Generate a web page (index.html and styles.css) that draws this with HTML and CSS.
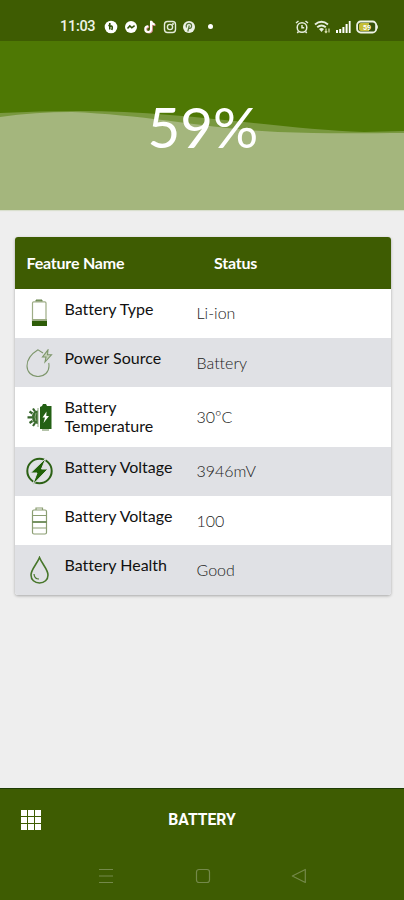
FILE: index.html
```
<!DOCTYPE html>
<html lang="en">
<head>
<meta charset="utf-8">
<title>Battery</title>
<link rel="stylesheet" href="styles.css">
</head>
<body>
<div class="status-bar">
  <span class="time">11:03</span>
  <div class="notifications">
    <svg width="14" height="14" viewBox="0 0 14 14"><circle cx="7" cy="7" r="6.3" fill="#fff"/><path d="M5.8 3v6.5M5.8 6.5c2.5-1.3 3 .5 2 3.5M4.3 5.5h2" fill="none" stroke="#315006" stroke-width="1.6"/></svg>
    <svg width="14" height="14" viewBox="0 0 14 14"><circle cx="7" cy="7" r="6" fill="#fff"/><path d="M3.5 8.5l2.3-2.6 2 1.9 2.8-2.2" fill="none" stroke="#315006" stroke-width="1.5"/></svg>
    <svg width="14" height="14" viewBox="0 0 14 14"><g fill="none" stroke-width="2"><path d="M8.5 1v8.3a2.9 2.9 0 1 1-2.8-3M8.5 1.5c.4 2 1.7 3 3.5 3.3" stroke="#d58a8c" transform="translate(.5 .4)"/><path d="M8 .8v8.4a2.9 2.9 0 1 1-2.8-3M8 1c.4 2.2 1.7 3.2 3.7 3.5" stroke="#fff"/></g></svg>
    <svg width="14" height="14" viewBox="0 0 14 14" fill="none" stroke="#e3ebd9" stroke-width="1.4"><rect x="1.5" y="1.5" width="11" height="11" rx="3"/><circle cx="7" cy="7" r="2.6"/><circle cx="10" cy="4" r=".4"/></svg>
    <svg width="14" height="14" viewBox="0 0 14 14"><circle cx="7" cy="7" r="6" fill="#edf2e6"/><path d="M5.8 11.5L7.3 5.5M4.5 7.5c-1.2-3 1-4.3 2.7-4.2 3.3.2 2.9 4.8.6 5.1-.7.1-1-.2-1.2-.6" fill="none" stroke="#56753a" stroke-width="1.2"/></svg>
    <i class="dot"></i>
  </div>
  <div class="system">
    <svg width="14" height="14" viewBox="0 0 14 14" fill="none" stroke="#e6edde" stroke-width="1.5"><circle cx="7" cy="7.5" r="4.8"/><path d="M1 3l2.5-2M13 3l-2.500-2M7 5v2.800h2.200M3.500 11.500L2.300 13M10.500 11.500l1.200 1.500"/></svg>
    <svg width="17" height="14" viewBox="0 0 17 14"><g fill="none" stroke="#e6edde" stroke-width="1.9"><path d="M1 4.500q6.500-5.500 13 0M3.200 7.200q4.300-3.600 8.600 0"/></g><path d="M5 9q2.500-2 5 0l-2.500 3z" fill="#e6edde"/><path d="M12 8.500v4M10.800 11.300l1.200 1.300 1.200-1.300M15 12.500v-4" fill="none" stroke="#d9dfae" stroke-width="1.2"/></svg>
    <svg width="15" height="14" viewBox="0 0 15 14" fill="#fff"><path d="M0 10h2v3H0zM3.200 9h2v4h-2zM6.400 7h2v6h-2zM9.600 4h2v9h-2zM12.800 1h1.800v12h-1.800z"/></svg>
    <svg width="24" height="14" viewBox="0 0 24 14"><rect x="1.100" y="1.500" width="19" height="11" rx="3.5" fill="#36520c" stroke="#eef3e5" stroke-width="1.8"/><path d="M20 3.500q4 3.500 0 7z" fill="#eef3e5"/><path d="M3 5q0-2 2-2h8v8H5q-2 0-2-2z" fill="#c4bd35"/><text class="level" x="7" y="9.500">59</text></svg>
  </div>
</div>
<section class="hero">
  <svg class="wave" viewBox="0 0 404 169" preserveAspectRatio="none"><path d="M0 72Q40 70 78 70C185 70 285 89 364 91L404 90V169H0z" fill="#79983f"/><path d="M0 76Q35 71 72 71C148 74 210 88 278 91C325 93 370 92 404 92V169H0z" fill="#a4b67d"/></svg>
  <div class="percent">59%</div>
</section>
<main class="card">
  <div class="head"><span class="feature">Feature Name</span><span>Status</span></div>
  <div class="row">
    <svg class="icon" viewBox="0 0 28 28"><path d="M11 3V1h6v2" fill="#8c9d79" stroke="#67854b"/><rect x="7.500" y="2.800" width="13.500" height="23.500" rx="1.200" fill="#fff" stroke="#9ead87" stroke-width="1.2"/><path d="M7 20h15v2H7z" fill="#9cac84"/><path d="M7 22h15v5H7z" fill="#2d5c08"/></svg>
    <span class="name">Battery Type</span><span class="value">Li-ion</span>
  </div>
  <div class="row">
    <svg class="icon" viewBox="0 0 28 28" fill="none" stroke="#7d966b" stroke-width="1.1"><path d="M18 4L13 .8C7 4.500 2 9.500 2 17c0 6 4.500 10.500 11 10.500S24 23 24 17c0-1 0-2-.3-3"/><path d="M23 .8l-5.500 7.200h3.500l-1 5 6.500-7.200h-4z" fill="#c6d1ba"/></svg>
    <span class="name">Power Source</span><span class="value">Battery</span>
  </div>
  <div class="row tall">
    <svg class="icon" viewBox="0 0 28 28"><path d="M15 4l2-1 1-2h3l1 2h4.500v23H15z" fill="#236014"/><path d="M13 7.500q-6 .5-6 6.800T13 21z" fill="#3c6e2f"/><path d="M13 5v19M11 10q-2 4 0 8" fill="none" stroke="#8eaa81"/><path d="M8 5.500l2 3M4.500 8.500l3 2M2.500 14.300H7M4.500 20l3-2M8 23l2-3" stroke="#35642a" stroke-width="2.2"/><path d="M21.500 8.500l-4 6H20L18.500 20l5.500-7h-2.700z" fill="#fff"/><path d="M17 27h7" stroke="#9baf8c" stroke-width="1.5"/></svg>
    <span class="name">Battery Temperature</span><span class="value">30ºC</span>
  </div>
  <div class="row">
    <svg class="icon" viewBox="0 0 28 28"><circle cx="14.500" cy="14" r="12.200" fill="none" stroke="#2c6115" stroke-width="2"/><path d="M21 1L5.500 16H12L7.500 28 23 12h-6.500z" fill="#216008" stroke="#e0e1e5" stroke-width="1"/></svg>
    <span class="name">Battery Voltage</span><span class="value">3946mV</span>
  </div>
  <div class="row">
    <svg class="icon" viewBox="0 0 28 28" fill="none" stroke="#8b9e73" stroke-width="1.2"><path d="M11 3V1h6.500v2"/><rect x="7.500" y="3" width="14" height="24" rx="1.500"/><path d="M7.500 8.500h14M7.500 21h14"/><path d="M7.500 15h14" stroke="#5f8048" stroke-width="1.7"/></svg>
    <span class="name">Battery Voltage</span><span class="value">100</span>
  </div>
  <div class="row">
    <svg class="icon" viewBox="0 0 28 28" fill="none" stroke="#47762a" stroke-width="1.6"><path d="M14.500 1.500C12 8 6 13.500 6 19c0 4.700 3.600 8 8.500 8s8.500-3.300 8.500-8c0-5.500-6-11-8.500-17.500z"/><path d="M9 18c.2 3 2 5 5 5" stroke-width="1.2"/></svg>
    <span class="name">Battery Health</span><span class="value">Good</span>
  </div>
</main>
<footer class="bottom">
  <div class="title-bar">
    <div class="apps"><i></i><i></i><i></i><i></i><i></i><i></i><i></i><i></i><i></i></div>
    <h1>BATTERY</h1>
  </div>
  <nav class="nav">
    <svg width="16" height="16" viewBox="0 0 16 16"><path d="M1 1.500h14M1 8h14M1 14.500h14"/></svg>
    <svg width="16" height="16" viewBox="0 0 16 16"><rect x="1.500" y="1.500" width="13" height="13" rx="2.500"/></svg>
    <svg width="16" height="16" viewBox="0 0 16 16"><path d="M14.300 1.500v13L1.300 8z" stroke-linejoin="round"/></svg>
  </nav>
</footer>
</body>
</html>
```

FILE: styles.css
```
* { box-sizing: border-box; }
body {
  margin: 0;
  height: 900px;
  display: flex;
  flex-direction: column;
  background: #eee;
  font-family: Lato, sans-serif;
  font-variant-ligatures: none;
  overflow: hidden;
}
svg { display: block; flex: none; }
.status-bar {
  height: 41px;
  flex: none;
  display: flex;
  align-items: center;
  padding: 12px 24px 0 60px;
  background: #3e5c02;
  color: #eef3e6;
}
.time { width: 44px; font: 500 14.5px/17px Roboto, sans-serif; letter-spacing: -0.3px; }
.notifications { display: flex; align-items: center; gap: 5.5px; }
.dot { width: 5px; height: 5px; margin-left: 6px; border-radius: 50%; background: #fff; }
.system { display: flex; align-items: center; gap: 5px; margin-left: auto; }
.level { font: bold 7px Roboto, sans-serif; fill: #fff; }
.hero {
  position: relative;
  height: 169px;
  flex: none;
  display: flex;
  justify-content: center;
  background: #4e7804;
  box-shadow: 0 1px 1px #d9dfce;
}
.wave { position: absolute; inset: 0; width: 100%; height: 100%; }
.percent {
  position: relative;
  padding: 51px 0 0 2px;
  font-size: 56.5px;
  line-height: 68px;
  color: #fff;
}
.card {
  margin: 27px 13px 0 14.5px;
  flex: none;
  border-radius: 3px;
  overflow: hidden;
  background: #fff;
  box-shadow: 0 1px 3px rgba(0, 0, 0, .3);
}
.head {
  height: 51.5px;
  display: flex;
  align-items: center;
  padding-left: 12px;
  background: #3e5c02;
  color: #fff;
  font-size: 16px;
  font-weight: 700;
  letter-spacing: -0.2px;
}
.feature { width: 187.5px; }
.row {
  height: 49.4px;
  display: grid;
  grid-template-columns: 38px 132px 1fr;
  align-items: center;
  padding-left: 12px;
}
.row:nth-child(odd) { background: #e0e1e5; }
.tall { height: 59.4px; }
.icon { width: 28px; height: 28px; margin-left: -1.5px; }
.name {
  align-self: start;
  padding: 11px 8px 0 0;
  font-size: 16px;
  line-height: 18.5px;
  color: #111;
}
.value { font-size: 16px; line-height: 20px; font-weight: 300; color: #222; }
.bottom { height: 112px; margin-top: auto; flex: none; background: #3e5c02; border-top: 1px solid #1d3b04; }
.title-bar {
  height: 62px;
  display: grid;
  grid-template-columns: 20px 1fr 20px;
  align-items: center;
  padding: 0 21px;
}
.apps { display: grid; grid-template-columns: repeat(3, 5.5px); gap: 1.5px; }
.apps i { height: 5.5px; background: #fff; }
.title-bar h1 { margin: 0; text-align: center; font: bold 15.7px/20px Roboto, sans-serif; color: #fff; }
.nav { display: flex; justify-content: space-between; padding: 17px 97px 0 98px; }
.nav svg { fill: none; stroke: #74894a; stroke-width: 1.2; }
```
